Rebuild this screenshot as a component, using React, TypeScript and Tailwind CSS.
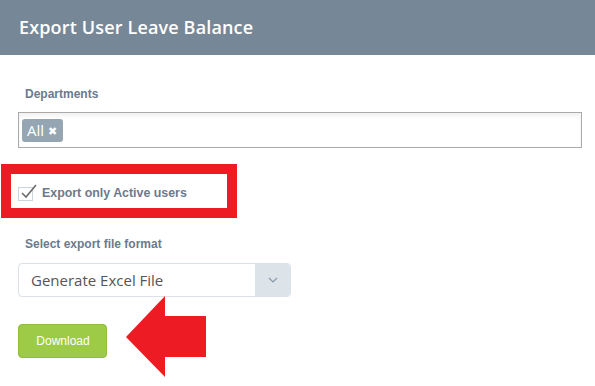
import React from 'react';

const label = "font-['Liberation_Sans',Arial,sans-serif] font-bold text-[12px] leading-[16px] text-[#6c7a8d] pl-[7px]";

export default function App() {
  return (
    <div className="relative w-[595px] h-[386px] bg-white overflow-hidden">
      {/* Header */}
      <div className="h-[55px] bg-[#768797] flex items-center px-[19px]">
        <h1 className="font-['Open_Sans',sans-serif] text-[18px] font-semibold text-white tracking-[0.15px]">
          Export User Leave Balance
        </h1>
      </div>

      <div className="flex flex-col pl-[18px] pr-[13px]">
        <div className={`${label} mt-[31px]`}>Departments</div>

        {/* Departments multi-select */}
        <div className="mt-[10px] h-[36px] border border-[#aaaaaa] shadow-[inset_0_3px_4px_rgba(0,0,0,0.06)] flex items-center pl-[3px]">
          <span className="h-[23px] pl-[5px] pr-[6px] rounded-[3px] bg-[#96a5b2] text-white flex items-center gap-[4px] font-['Open_Sans',sans-serif] text-[15px]">
            All
            <span className="text-[11px] leading-none">✖</span>
          </span>
        </div>

        {/* Highlighted checkbox */}
        <div className="-ml-[17px] mt-[16px] w-[236px] h-[54px] border-[10px] border-[#ed1c24] flex items-center pl-[7px] pt-[4px] gap-[9px]">
          <span className="relative w-[15px] h-[14px] border border-[#c9d5df] bg-white mt-[1px]">
            <svg className="absolute -top-[5px] left-[1px]" width="17" height="17" viewBox="0 0 17 17">
              <path d="M2 10 L6 14 L16 2" fill="none" stroke="#6b6b6b" strokeWidth="1.6" />
            </svg>
          </span>
          <span className="font-['Liberation_Sans',Arial,sans-serif] font-bold text-[12.4px] text-[#6c7a8d]">
            Export only Active users
          </span>
        </div>

        <div className={`${label} mt-[18px]`}>Select export file format</div>

        {/* Format select */}
        <div className="mt-[11px] w-[273px] h-[34px] flex rounded-[4px] border border-[#dbe1e7] overflow-hidden">
          <div className="flex-1 flex items-center pl-[12px] font-['Open_Sans',sans-serif] text-[15px] text-[#555555]">
            Generate Excel File
          </div>
          <div className="w-[35px] bg-[#dce3e9] flex items-center justify-center">
            <svg width="10" height="6" viewBox="0 0 10 6">
              <path d="M1 1 L5 5 L9 1" fill="none" stroke="#8a99a8" strokeWidth="1.2" />
            </svg>
          </div>
        </div>

        <button className="mt-[27px] w-[89px] h-[34px] rounded-[4px] bg-[#9dcb47] border border-[#8fbd3d] text-white font-['Liberation_Sans',Arial,sans-serif] text-[12px] pl-[1px]">
          Download
        </button>
      </div>

      {/* Red arrow annotation */}
      <svg className="absolute left-0 top-0 pointer-events-none" width="595" height="386">
        <polygon points="126,337 165,296 165,316 206,316 206,357 165,357 165,377" fill="#ed1c24" />
      </svg>
    </div>
  );
}
